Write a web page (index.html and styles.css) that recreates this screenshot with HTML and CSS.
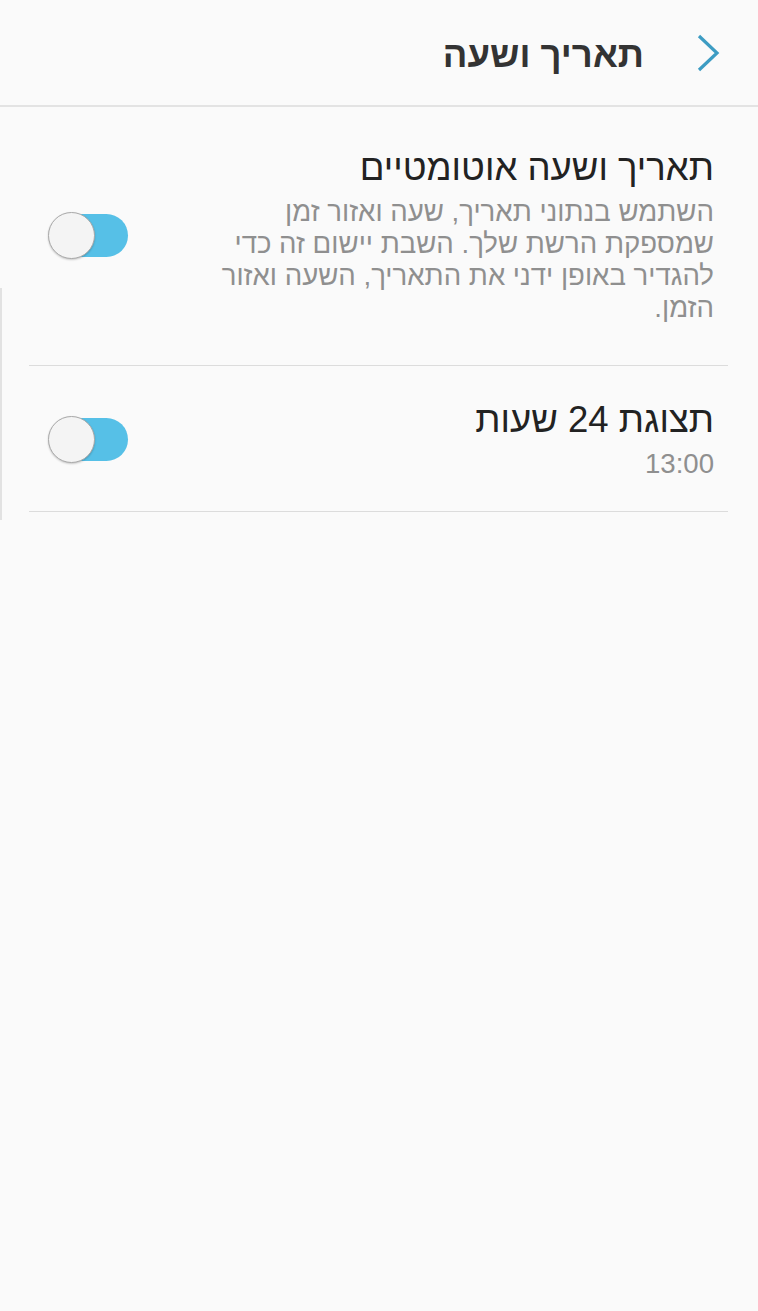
FILE: index.html
```html
<!DOCTYPE html>
<html lang="he" dir="rtl">

<head>
    <meta charset="UTF-8">
    <meta name="viewport" content="width=device-width, initial-scale=1.0">
    <title>תאריך ושעה</title>
    <link rel="stylesheet" href="styles.css">
</head>

<body>
    <!-- כותרת -->
    <header class="topbar">
        <svg class="back" width="24" height="40" viewBox="0 0 24 40">
            <polyline points="3,3 21,20 3,37" fill="none" stroke="#3d9cc3" stroke-width="3.2" stroke-linejoin="miter" />
        </svg>
        <h1 class="topbar-title">תאריך ושעה</h1>
    </header>

    <div class="list">
        <div class="row row-tall">
            <div class="row-text">
                <div class="row-title">תאריך ושעה אוטומטיים</div>
                <div class="row-sub">השתמש בנתוני תאריך, שעה ואזור זמן שמספקת הרשת שלך. השבת יישום זה כדי להגדיר באופן ידני את התאריך, השעה ואזור הזמן.</div>
            </div>
            <div class="switch"><span class="knob"></span></div>
        </div>
        <div class="row">
            <div class="row-text">
                <div class="row-title">תצוגת 24 שעות</div>
                <div class="row-sub">13:00</div>
            </div>
            <div class="switch"><span class="knob"></span></div>
        </div>
    </div>

    <!-- פס גלילה -->
    <div class="scroll-edge"></div>
</body>

</html>
```

FILE: styles.css
```css
 body {
     margin: 0;
     min-height: 1311px;
     background-color: #fafafa;
     font-family: "Liberation Sans", "DejaVu Sans", sans-serif;
     direction: rtl;
 }

 .topbar {
     display: flex;
     align-items: center;
     height: 105px;
     padding-right: 38px;
     border-bottom: 2px solid #e3e3e3;
     box-sizing: content-box;
 }

 .back {
     display: block;
 }

 .topbar-title {
     margin: 4px 52px 0 0;
     font-size: 36.5px;
     font-weight: 700;
     color: #333;
     line-height: 44px;
 }

 .list {
     padding: 0 30px 0 29px;
 }

 .row {
     display: flex;
     align-items: center;
     justify-content: space-between;
     padding: 32px 14px 31px 19px;
     border-bottom: 1px solid #dcdcdc;
 }

 .row-tall {
     padding-top: 39px;
     padding-bottom: 41px;
 }

 .row-text {
     width: 530px;
 }

 .row-title {
     font-size: 36.5px;
     line-height: 44px;
     color: #222;
 }

 .row-sub {
     margin-top: 6px;
     font-size: 27.6px;
     line-height: 32px;
     color: #8f8f8f;
 }

 /* מתג */
.switch {
     position: relative;
     width: 80px;
     height: 43px;
 }

 .switch::before {
     content: "";
     position: absolute;
     top: 0;
     left: 12px;
     right: 0;
     bottom: 0;
     background-color: #56c0e7;
     border-radius: 22px;
 }

 .knob {
     position: absolute;
     top: -2px;
     left: 0;
     width: 45px;
     height: 45px;
     border-radius: 50%;
     background-color: #f4f4f4;
     border: 1px solid #a9a9a9;
     box-shadow: 0 1px 2px rgba(0, 0, 0, 0.2);
 }

 .scroll-edge {
     position: absolute;
     left: 0;
     top: 288px;
     width: 2px;
     height: 232px;
     background-color: #e2e2e2;
 }
```
